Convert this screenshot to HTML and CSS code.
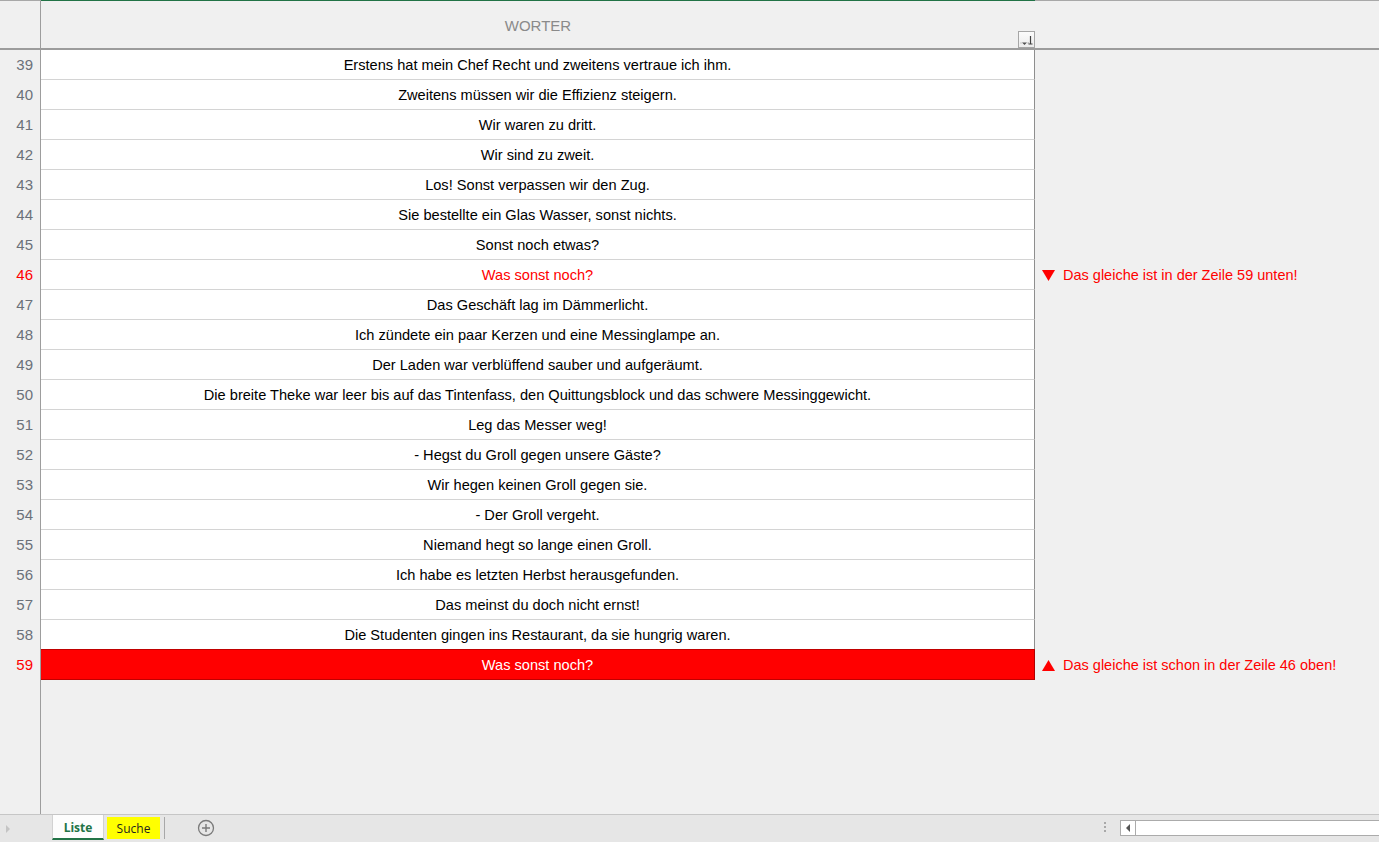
FILE: index.html
```html
<!DOCTYPE html>
<html lang="de">
<head>
<meta charset="utf-8">
<title>Liste</title>
<link rel="stylesheet" href="styles.css">
</head>
<body>
<div class="sheet">
  <div class="head">
    <div class="rn-h"></div>
    <div class="col-h">WORTER
      <span class="filter"><svg width="15" height="14" viewBox="0 0 15 14"><path d="M3 9.5h5l-2.5 2.5z" fill="#505050"/><path d="M1.5 10h1M8.5 10h1.5" stroke="#9a9a9a" stroke-width="1"/><path d="M11.5 3v8" stroke="#404040" stroke-width="1.2"/><path d="M9.5 11h4" stroke="#404040" stroke-width="1"/></svg></span>
    </div>
    <div class="rest-h"></div>
  </div>
  <div class="body">
    <div class="row"><div class="rn">39</div><div class="cell">Erstens hat mein Chef Recht und zweitens vertraue ich ihm.</div><div class="note"></div></div>
    <div class="row"><div class="rn">40</div><div class="cell">Zweitens müssen wir die Effizienz steigern.</div><div class="note"></div></div>
    <div class="row"><div class="rn">41</div><div class="cell">Wir waren zu dritt.</div><div class="note"></div></div>
    <div class="row"><div class="rn">42</div><div class="cell">Wir sind zu zweit.</div><div class="note"></div></div>
    <div class="row"><div class="rn">43</div><div class="cell">Los! Sonst verpassen wir den Zug.</div><div class="note"></div></div>
    <div class="row"><div class="rn">44</div><div class="cell">Sie bestellte ein Glas Wasser, sonst nichts.</div><div class="note"></div></div>
    <div class="row"><div class="rn">45</div><div class="cell">Sonst noch etwas?</div><div class="note"></div></div>
    <div class="row dup-first"><div class="rn">46</div><div class="cell">Was sonst noch?</div><div class="note"><svg class="tri" width="13" height="11" viewBox="0 0 13 11"><path d="M0 0h13L6.5 11z" fill="#ff0000"/></svg><span>Das gleiche ist in der Zeile 59 unten!</span></div></div>
    <div class="row"><div class="rn">47</div><div class="cell">Das Geschäft lag im Dämmerlicht.</div><div class="note"></div></div>
    <div class="row"><div class="rn">48</div><div class="cell">Ich zündete ein paar Kerzen und eine Messinglampe an.</div><div class="note"></div></div>
    <div class="row"><div class="rn">49</div><div class="cell">Der Laden war verblüffend sauber und aufgeräumt.</div><div class="note"></div></div>
    <div class="row"><div class="rn">50</div><div class="cell">Die breite Theke war leer bis auf das Tintenfass, den Quittungsblock und das schwere Messinggewicht.</div><div class="note"></div></div>
    <div class="row"><div class="rn">51</div><div class="cell">Leg das Messer weg!</div><div class="note"></div></div>
    <div class="row"><div class="rn">52</div><div class="cell">- Hegst du Groll gegen unsere Gäste?</div><div class="note"></div></div>
    <div class="row"><div class="rn">53</div><div class="cell">Wir hegen keinen Groll gegen sie.</div><div class="note"></div></div>
    <div class="row"><div class="rn">54</div><div class="cell">- Der Groll vergeht.</div><div class="note"></div></div>
    <div class="row"><div class="rn">55</div><div class="cell">Niemand hegt so lange einen Groll.</div><div class="note"></div></div>
    <div class="row"><div class="rn">56</div><div class="cell">Ich habe es letzten Herbst herausgefunden.</div><div class="note"></div></div>
    <div class="row"><div class="rn">57</div><div class="cell">Das meinst du doch nicht ernst!</div><div class="note"></div></div>
    <div class="row"><div class="rn">58</div><div class="cell">Die Studenten gingen ins Restaurant, da sie hungrig waren.</div><div class="note"></div></div>
    <div class="row dup-second"><div class="rn">59</div><div class="cell">Was sonst noch?</div><div class="note"><svg class="tri" width="13" height="11" viewBox="0 0 13 11"><path d="M0 11h13L6.5 0z" fill="#ff0000"/></svg><span>Das gleiche ist schon in der Zeile 46 oben!</span></div></div>
    <div class="fill"><div class="rn"></div></div>
  </div>
</div>
<div class="tabbar">
  <div class="nav"><svg width="6" height="8" viewBox="0 0 6 8"><path d="M1 0l4 4-4 4z" fill="#c4c4c4"/></svg></div>
  <div class="tab active">Liste</div>
  <div class="tab yellow">Suche</div>
  <div class="sep"></div>
  <div class="add"><svg width="18" height="18" viewBox="0 0 18 18"><circle cx="9" cy="9" r="7.5" fill="none" stroke="#7a7a7a" stroke-width="1.3"/><path d="M9 5v8M5 9h8" stroke="#7a7a7a" stroke-width="1.4"/></svg></div>
  <div class="hs">
    <div class="dots"><i></i><i></i><i></i></div>
    <div class="scroll"><div class="sbtn"><svg width="5" height="8" viewBox="0 0 5 8"><path d="M4 0v8L0 4z" fill="#555"/></svg></div></div>
  </div>
</div>
</body>
</html>
```

FILE: styles.css
```css
* { box-sizing: border-box; }
html, body { margin: 0; padding: 0; }
body {
  width: 1379px;
  height: 842px;
  overflow: hidden;
  background: #f0f0f0;
  font-family: "Liberation Sans", Arial, sans-serif;
  font-size: 15px;
  color: #000;
}
.sheet {
  height: 814px;
  display: flex;
  flex-direction: column;
}
.head {
  display: flex;
  height: 50px;
  flex: none;
}
.head > div {
  border-top: 1px solid #a8a8a8;
  border-bottom: 2px solid #9c9c9c;
}
.rn-h {
  width: 41px;
  border-right: 1px solid #9d9d9d;
}
.col-h {
  width: 994px;
  position: relative;
  display: flex;
  align-items: center;
  justify-content: center;
  color: #8a8a8a;
  padding-top: 2px;
  border-top-color: #217346 !important;
}
.rest-h { flex: 1; }
.filter {
  position: absolute;
  right: 0;
  bottom: 0;
  width: 17px;
  height: 17px;
  border: 1px solid #a6a6a6;
  background: linear-gradient(#fbfbfb, #ececec);
  display: flex;
  align-items: center;
  justify-content: center;
}
.body {
  flex: 1;
  display: flex;
  flex-direction: column;
}
.row {
  display: flex;
  height: 30px;
  flex: none;
}
.rn {
  width: 41px;
  flex: none;
  border-right: 1px solid #9d9d9d;
  text-align: right;
  padding-right: 7px;
  color: #6b717a;
  line-height: 30px;
}
.cell {
  width: 994px;
  flex: none;
  background: #fff;
  border-bottom: 1px solid #d4d4d4;
  border-right: 1px solid #8e8e8e;
  text-align: center;
  padding-top: 1px;
  line-height: 28px;
  font-size: 14.6px;
  white-space: nowrap;
}
.note {
  flex: 1;
  display: flex;
  align-items: center;
  padding-left: 7px;
  color: #ff0000;
  font-size: 14.5px;
  white-space: nowrap;
}
.note .tri { margin-right: 8px; flex: none; }
.dup-first .rn, .dup-second .rn { color: #ff0000; }
.dup-first .cell { color: #ff0000; }
.dup-second .cell {
  background: #ff0000;
  color: #fff;
  border-bottom-color: #c00000;
  border-right-color: #b00000;
  box-shadow: 0 -1px 0 #c00000;
}
.fill {
  flex: 1;
  display: flex;
}
.fill .rn { height: auto; }
.tabbar {
  height: 28px;
  border-top: 1px solid #c6c6c6;
  background: #e6e6e6;
  display: flex;
  align-items: flex-start;
  font-family: "Open Sans", "Noto Sans", sans-serif;
  font-size: 12px;
}
.nav {
  width: 52px;
  height: 27px;
  display: flex;
  align-items: center;
  padding-left: 5px;
}
.tab {
  display: flex;
  align-items: center;
  justify-content: center;
}
.tab.active {
  width: 52px;
  height: 25px;
  background: #fdfdfd;
  border-left: 1px solid #d2d2d2;
  border-right: 1px solid #d2d2d2;
  border-bottom: 2px solid #217346;
  color: #217346;
  font-weight: bold;
  padding-top: 1px;
}
.tab.yellow {
  margin-left: 3px;
  margin-top: 2px;
  width: 53px;
  height: 22px;
  background: #ffff00;
  color: #1f1f1f;
}
.sep {
  margin-left: 4px;
  margin-top: 2px;
  width: 1px;
  height: 22px;
  background: #a8a8a8;
}
.add {
  margin-left: 32px;
  margin-top: 4px;
  height: 18px;
}
.hs {
  margin-left: auto;
  display: flex;
  align-items: flex-start;
}
.dots {
  margin-top: 7px;
  margin-right: 14px;
  display: flex;
  flex-direction: column;
  gap: 2px;
}
.dots i {
  display: block;
  width: 2px;
  height: 2px;
  background: #a8a8a8;
}
.scroll {
  margin-top: 5px;
  width: 259px;
  height: 16px;
  background: #fff;
  border: 1px solid #ababab;
  border-right: none;
  display: flex;
}
.sbtn {
  width: 15px;
  height: 14px;
  border-right: 1px solid #ababab;
  display: flex;
  align-items: center;
  justify-content: center;
}
```
